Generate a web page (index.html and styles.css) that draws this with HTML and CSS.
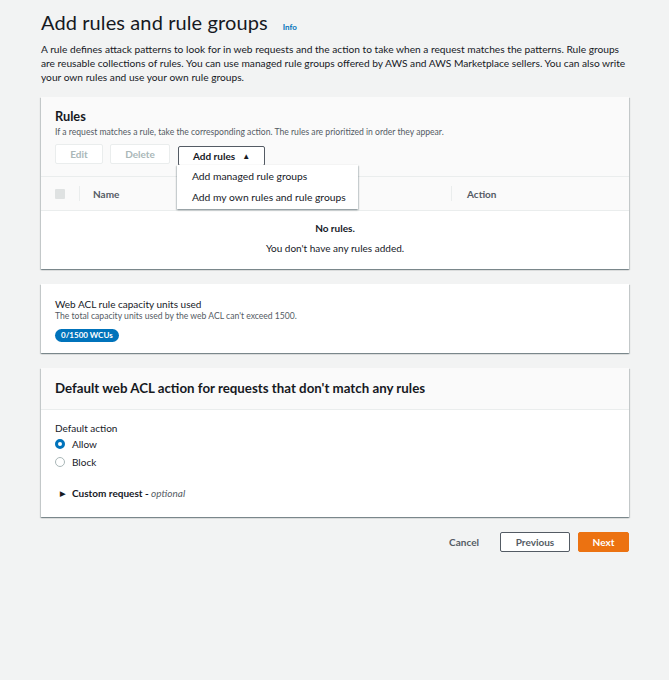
FILE: index.html
```html
<!DOCTYPE html>
<html>
<head>
<meta charset="utf-8">
<link rel="stylesheet" href="styles.css">
</head>
<body>
<div class="page">
  <div class="title-row">
    <h1 class="title">Add rules and rule groups</h1>
    <span class="info">Info</span>
  </div>
  <p class="desc">A rule defines attack patterns to look for in web requests and the action to take when a request matches the patterns. Rule groups<br>are reusable collections of rules. You can use managed rule groups offered by AWS and AWS Marketplace sellers. You can also write<br>your own rules and use your own rule groups.</p>

  <div class="card rules-card">
    <div class="rules-head">
      <h2 class="card-title">Rules</h2>
      <p class="small small-rules">If a request matches a rule, take the corresponding action. The rules are prioritized in order they appear.</p>
      <div class="btn-row">
        <span class="btn disabled btn-edit">Edit</span>
        <span class="btn disabled btn-delete">Delete</span>
        <div class="dd-wrap">
          <span class="btn btn-add">Add rules <span class="caret">&#9650;</span></span>
          <div class="menu">
            <div class="menu-item">Add managed rule groups</div>
            <div class="menu-item">Add my own rules and rule groups</div>
          </div>
        </div>
      </div>
    </div>
    <div class="thead">
      <div class="th th-check"><span class="checkbox"></span></div>
      <div class="th th-name">Name</div>
      <div class="th th-action">Action</div>
    </div>
    <div class="tbody">
      <div class="empty-title">No rules.</div>
      <div class="empty-sub">You don't have any rules added.</div>
    </div>
  </div>

  <div class="card wcu-card">
    <div class="wcu-title">Web ACL rule capacity units used</div>
    <p class="small small-wcu">The total capacity units used by the web ACL can't exceed 1500.</p>
    <span class="badge">0/1500 WCUs</span>
  </div>

  <div class="card default-card">
    <div class="default-head">
      <h2 class="card-title big">Default web ACL action for requests that don't match any rules</h2>
    </div>
    <div class="default-body">
      <div class="label">Default action</div>
      <div class="radio-row first"><span class="radio checked"></span><span>Allow</span></div>
      <div class="radio-row"><span class="radio"></span><span>Block</span></div>
      <div class="expander"><span class="tri">&#9654;</span><span class="exp-label">Custom request - <em>optional</em></span></div>
    </div>
  </div>

  <div class="footer">
    <span class="link-btn">Cancel</span>
    <span class="btn btn-prev">Previous</span>
    <span class="btn btn-next">Next</span>
  </div>
</div>
</body>
</html>
```

FILE: styles.css
```css
* { box-sizing: border-box; }
html, body { margin: 0; padding: 0; }
body {
  background: #f2f3f3;
  font-family: Lato, "Liberation Sans", Arial, sans-serif;
  color: #16191f;
  width: 669px;
  height: 680px;
  overflow: hidden;
}
.page {
  padding: 9px 40px 0 41px;
}
.title-row {
  display: flex;
  align-items: baseline;
  gap: 15px;
  height: 26px;
}
.title {
  margin: 0;
  font-size: 20px;
  font-weight: 400;
  line-height: 26px;
  letter-spacing: 0.1px;
}
.info {
  font-size: 8px;
  font-weight: 700;
  color: #0073bb;
}
.desc {
  margin: 7px 0 0;
  font-size: 10.2px;
  line-height: 14px;
  color: #16191f;
  white-space: nowrap;
}
.card {
  background: #fff;
  box-shadow: 0 1px 1px 0 rgba(0,28,36,0.3), 1px 1px 1px 0 rgba(0,28,36,0.15), -1px 1px 1px 0 rgba(0,28,36,0.15);
}
.rules-card {
  margin-top: 13px;
  height: 172px;
}
.rules-head {
  background: #fafafa;
  padding: 12px 14px 0;
  height: 79px;
}
.card-title {
  margin: 0;
  font-size: 12.8px;
  font-weight: 700;
  line-height: 15px;
}
.card-title.big { font-size: 13.3px; }
.small {
  margin: 0;
  line-height: 11px;
  color: #545b64;
}
.small-rules { font-size: 8.6px; margin-top: 3px; }
.small-wcu { font-size: 8.6px; }
.btn-row {
  display: flex;
  gap: 7px;
  margin-top: 6px;
  align-items: flex-start;
}
.btn {
  display: inline-flex;
  align-items: center;
  justify-content: center;
  height: 20px;
  border: 1px solid #545b64;
  border-radius: 2px;
  font-size: 10px;
  font-weight: 700;
  background: #fff;
  color: #16191f;
}
.btn.disabled {
  border-color: #eaeded;
  color: #aab7b8;
  background: #fff;
}
.btn-edit { width: 48px; }
.btn-delete { width: 60px; }
.dd-wrap { position: relative; margin-left: 1px; }
.btn-add { width: 87px; gap: 7px; }
.caret { font-size: 8px; }
.menu {
  position: absolute;
  top: 21px;
  left: -1px;
  width: 181px;
  background: #fff;
  box-shadow: 0 1px 2px 0 rgba(0,28,36,0.35), 1px 1px 1px 0 rgba(0,28,36,0.1), -1px 1px 1px 0 rgba(0,28,36,0.1);
  padding: 1px 0 1px;
  z-index: 5;
}
.menu-item {
  font-size: 10.3px;
  line-height: 21px;
  padding-left: 15px;
  color: #16191f;
}
.thead {
  display: flex;
  align-items: center;
  height: 35px;
  background: #fafafa;
  border-top: 1px solid #eaeded;
  border-bottom: 1px solid #eaeded;
  font-size: 10px;
  font-weight: 700;
  color: #545b64;
}
.th { position: relative; height: 100%; display: flex; align-items: center; }
.th-check { width: 39px; padding-left: 14px; }
.checkbox {
  width: 10px; height: 10px;
  background: #dfe2e2;
  border-radius: 1px;
}
.th-name { width: 372px; padding-left: 13px; }
.th-check::after, .th-name::after {
  content: "";
  position: absolute;
  right: 0;
  top: 9px;
  bottom: 9px;
  border-right: 1px solid #eaeded;
}
.th-action { padding-left: 15px; }
.tbody {
  text-align: center;
  padding-top: 11px;
}
.empty-title {
  font-size: 10px;
  font-weight: 700;
  line-height: 13px;
}
.empty-sub {
  font-size: 10px;
  line-height: 13px;
  margin-top: 7px;
  color: #16191f;
}
.wcu-card {
  margin-top: 15px;
  height: 69px;
  padding: 14px 14px 0;
}
.wcu-title {
  font-size: 10px;
  line-height: 13px;
}
.badge {
  display: inline-block;
  margin-top: 4px;
  background: #0073bb;
  color: #fff;
  font-size: 8px;
  font-weight: 700;
  line-height: 13px;
  padding: 0 6px;
  border-radius: 7px;
}
.default-card {
  margin-top: 15px;
  height: 149px;
}
.default-head {
  background: #fafafa;
  height: 42px;
  padding: 0 14px;
  display: flex;
  align-items: center;
  border-bottom: 1px solid #eaeded;
}
.default-body {
  padding: 12px 14px 0;
}
.label {
  font-size: 10px;
  line-height: 12px;
  color: #16191f;
}
.radio-row {
  display: flex;
  align-items: center;
  gap: 7px;
  height: 18px;
  font-size: 10px;
}
.radio-row.first { margin-top: 1px; }
.radio {
  width: 10px; height: 10px;
  border-radius: 50%;
  border: 1px solid #aab7b8;
  background: #fff;
}
.radio.checked {
  border: 3px solid #0073bb;
}
.expander {
  display: flex;
  align-items: center;
  margin-top: 16px;
  padding-left: 5px;
  gap: 7px;
  font-size: 10px;
  font-weight: 700;
  color: #16191f;
}
.tri { font-size: 7px; }
.exp-label em { font-weight: 400; color: #545b64; }
.footer {
  display: flex;
  justify-content: flex-end;
  align-items: center;
  gap: 8px;
  margin-top: 15px;
}
.link-btn {
  font-size: 10px;
  font-weight: 700;
  color: #545b64;
  margin-right: 13px;
}
.btn-prev { width: 70px; color: #545b64; border-color: #545b64; }
.btn-next { width: 51px; background: #ec7211; border-color: #ec7211; color: #fff; }
```
